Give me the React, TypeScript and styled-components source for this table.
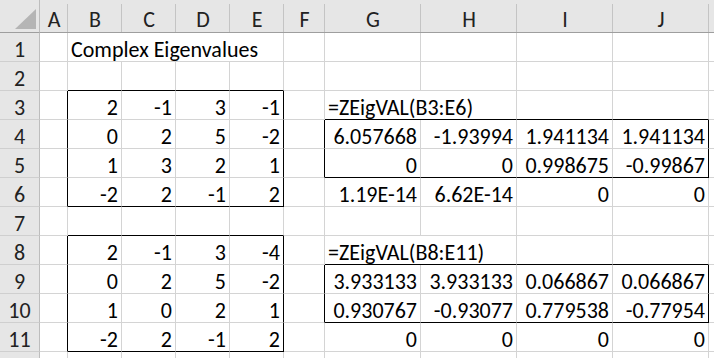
import styled, { createGlobalStyle } from 'styled-components'

const GlobalStyle = createGlobalStyle`
  html, body {
    margin: 0;
    padding: 0;
    background: #ffffff;
    overflow: hidden;
  }
`

// K and row 12 only peek in at the edges, so their labels stay blank
const COLS = ['A', 'B', 'C', 'D', 'E', 'F', 'G', 'H', 'I', 'J', '']
const ROW_COUNT = 12

type Entry = { text: string; align?: 'left' | 'right'; span?: number }

// data keyed by row, then by column index (A = 1)
const data: Record<number, Record<number, Entry>> = {
  1: { 2: { text: 'Complex Eigenvalues', align: 'left', span: 4 } },
  3: { 7: { text: '=ZEigVAL(B3:E6)', align: 'left', span: 2 } },
  8: { 7: { text: '=ZEigVAL(B8:E11)', align: 'left', span: 2 } },
}

const put = (row: number, startCol: number, values: string[]) => {
  data[row] = data[row] || {}
  values.forEach((v, i) => {
    data[row][startCol + i] = { text: v }
  })
}

put(3, 2, ['2', '-1', '3', '-1'])
put(4, 2, ['0', '2', '5', '-2', '', '6.057668', '-1.93994', '1.941134', '1.941134'])
put(5, 2, ['1', '3', '2', '1', '', '0', '0', '0.998675', '-0.99867'])
put(6, 2, ['-2', '2', '-1', '2', '', '1.19E-14', '6.62E-14', '0', '0'])
put(8, 2, ['2', '-1', '3', '-4'])
put(9, 2, ['0', '2', '5', '-2', '', '3.933133', '3.933133', '0.066867', '0.066867'])
put(10, 2, ['1', '0', '2', '1', '', '0.930767', '-0.93077', '0.779538', '-0.77954'])
put(11, 2, ['-2', '2', '-1', '2', '', '0', '0', '0', '0'])

// outlined ranges (thin black border)
const boxes = [
  { r1: 3, r2: 6, c1: 2, c2: 5 },
  { r1: 4, r2: 5, c1: 7, c2: 10 },
  { r1: 8, r2: 11, c1: 2, c2: 5 },
  { r1: 9, r2: 10, c1: 7, c2: 10 },
]

const inBox = (r: number, c: number) =>
  boxes.find(b => r >= b.r1 && r <= b.r2 && c >= b.c1 && c <= b.c2)

const blackRight = (r: number, c: number) => {
  const own = inBox(r, c)
  const next = inBox(r, c + 1)
  return (!!own && own.c2 === c) || (!!next && next.c1 === c + 1)
}

const blackBottom = (r: number, c: number) => {
  const own = inBox(r, c)
  const below = inBox(r + 1, c)
  return (!!own && own.r2 === r) || (!!below && below.r1 === r + 1)
}

const App = () => {
  const rows = []
  for (let r = 1; r <= ROW_COUNT; r++) {
    rows.push(<RowHead key={`h${r}`}>{r < ROW_COUNT ? r : ''}</RowHead>)
    let c = 1
    while (c <= COLS.length) {
      const entry = data[r]?.[c]
      const span = entry?.span ?? 1
      const last = c + span - 1
      rows.push(
        <Cell
          key={`${r}-${c}`}
          $span={span}
          $align={entry?.align ?? 'right'}
          $right={blackRight(r, last)}
          $bottom={blackBottom(r, c)}
        >
          {entry?.text}
        </Cell>
      )
      c += span
    }
  }

  return (
    <>
      <GlobalStyle />
      <Window>
        <Sheet>
          <Corner>
            <Triangle />
          </Corner>
          {COLS.map((col, i) => (
            <ColHead key={i}>{col}</ColHead>
          ))}
          {rows}
        </Sheet>
      </Window>
    </>
  )
}

export default App

const Window = styled.div`
  width: 100vw;
  height: 100vh;
  overflow: hidden;
`

const Sheet = styled.div`
  display: grid;
  grid-template-columns: 40px 28px 54px 54px 54px 54px 41px 96px 96px 96px 96px 96px;
  grid-template-rows: 33px repeat(${ROW_COUNT}, 29px);
  width: max-content;
  font-family: Carlito, Lato, 'Liberation Sans', sans-serif;
  font-size: 22px;
  line-height: 22px;
  color: #000;
`

const HeadBase = styled.div`
  position: relative;
  box-sizing: border-box;
  display: flex;
  align-items: flex-end;
  justify-content: center;
  background: #e6e6e6;
  color: #222;
  white-space: nowrap;
`

const Corner = styled(HeadBase)`
  justify-content: flex-end;
  padding: 0 3px 3px 0;
  border-right: 1px solid #bdbdbd;
  border-bottom: 1px solid #9e9e9e;
`

const Triangle = styled.div`
  width: 21px;
  height: 20px;
  background: #b5b5b5;
  clip-path: polygon(100% 0, 100% 100%, 0 100%);
`

const ColHead = styled(HeadBase)`
  padding-bottom: 1px;
  border-bottom: 1px solid #9e9e9e;

  &::after {
    content: '';
    position: absolute;
    right: 0;
    top: 4px;
    bottom: 0;
    width: 1px;
    background: #c4c4c4;
  }
`

const RowHead = styled(HeadBase)`
  padding-bottom: 0;
  border-right: 1px solid #bdbdbd;
  border-bottom: 1px solid #cfcfcf;
`

const Cell = styled.div<{
  $span: number
  $align: 'left' | 'right'
  $right: boolean
  $bottom: boolean
}>`
  grid-column: span ${p => p.$span};
  box-sizing: border-box;
  display: flex;
  align-items: flex-end;
  justify-content: ${p => (p.$align === 'left' ? 'flex-start' : 'flex-end')};
  padding: 0 3px 0 3px;
  white-space: nowrap;
  border-right: 1px solid ${p => (p.$right ? '#000' : '#d4d4d4')};
  border-bottom: 1px solid ${p => (p.$bottom ? '#000' : '#d4d4d4')};
`
